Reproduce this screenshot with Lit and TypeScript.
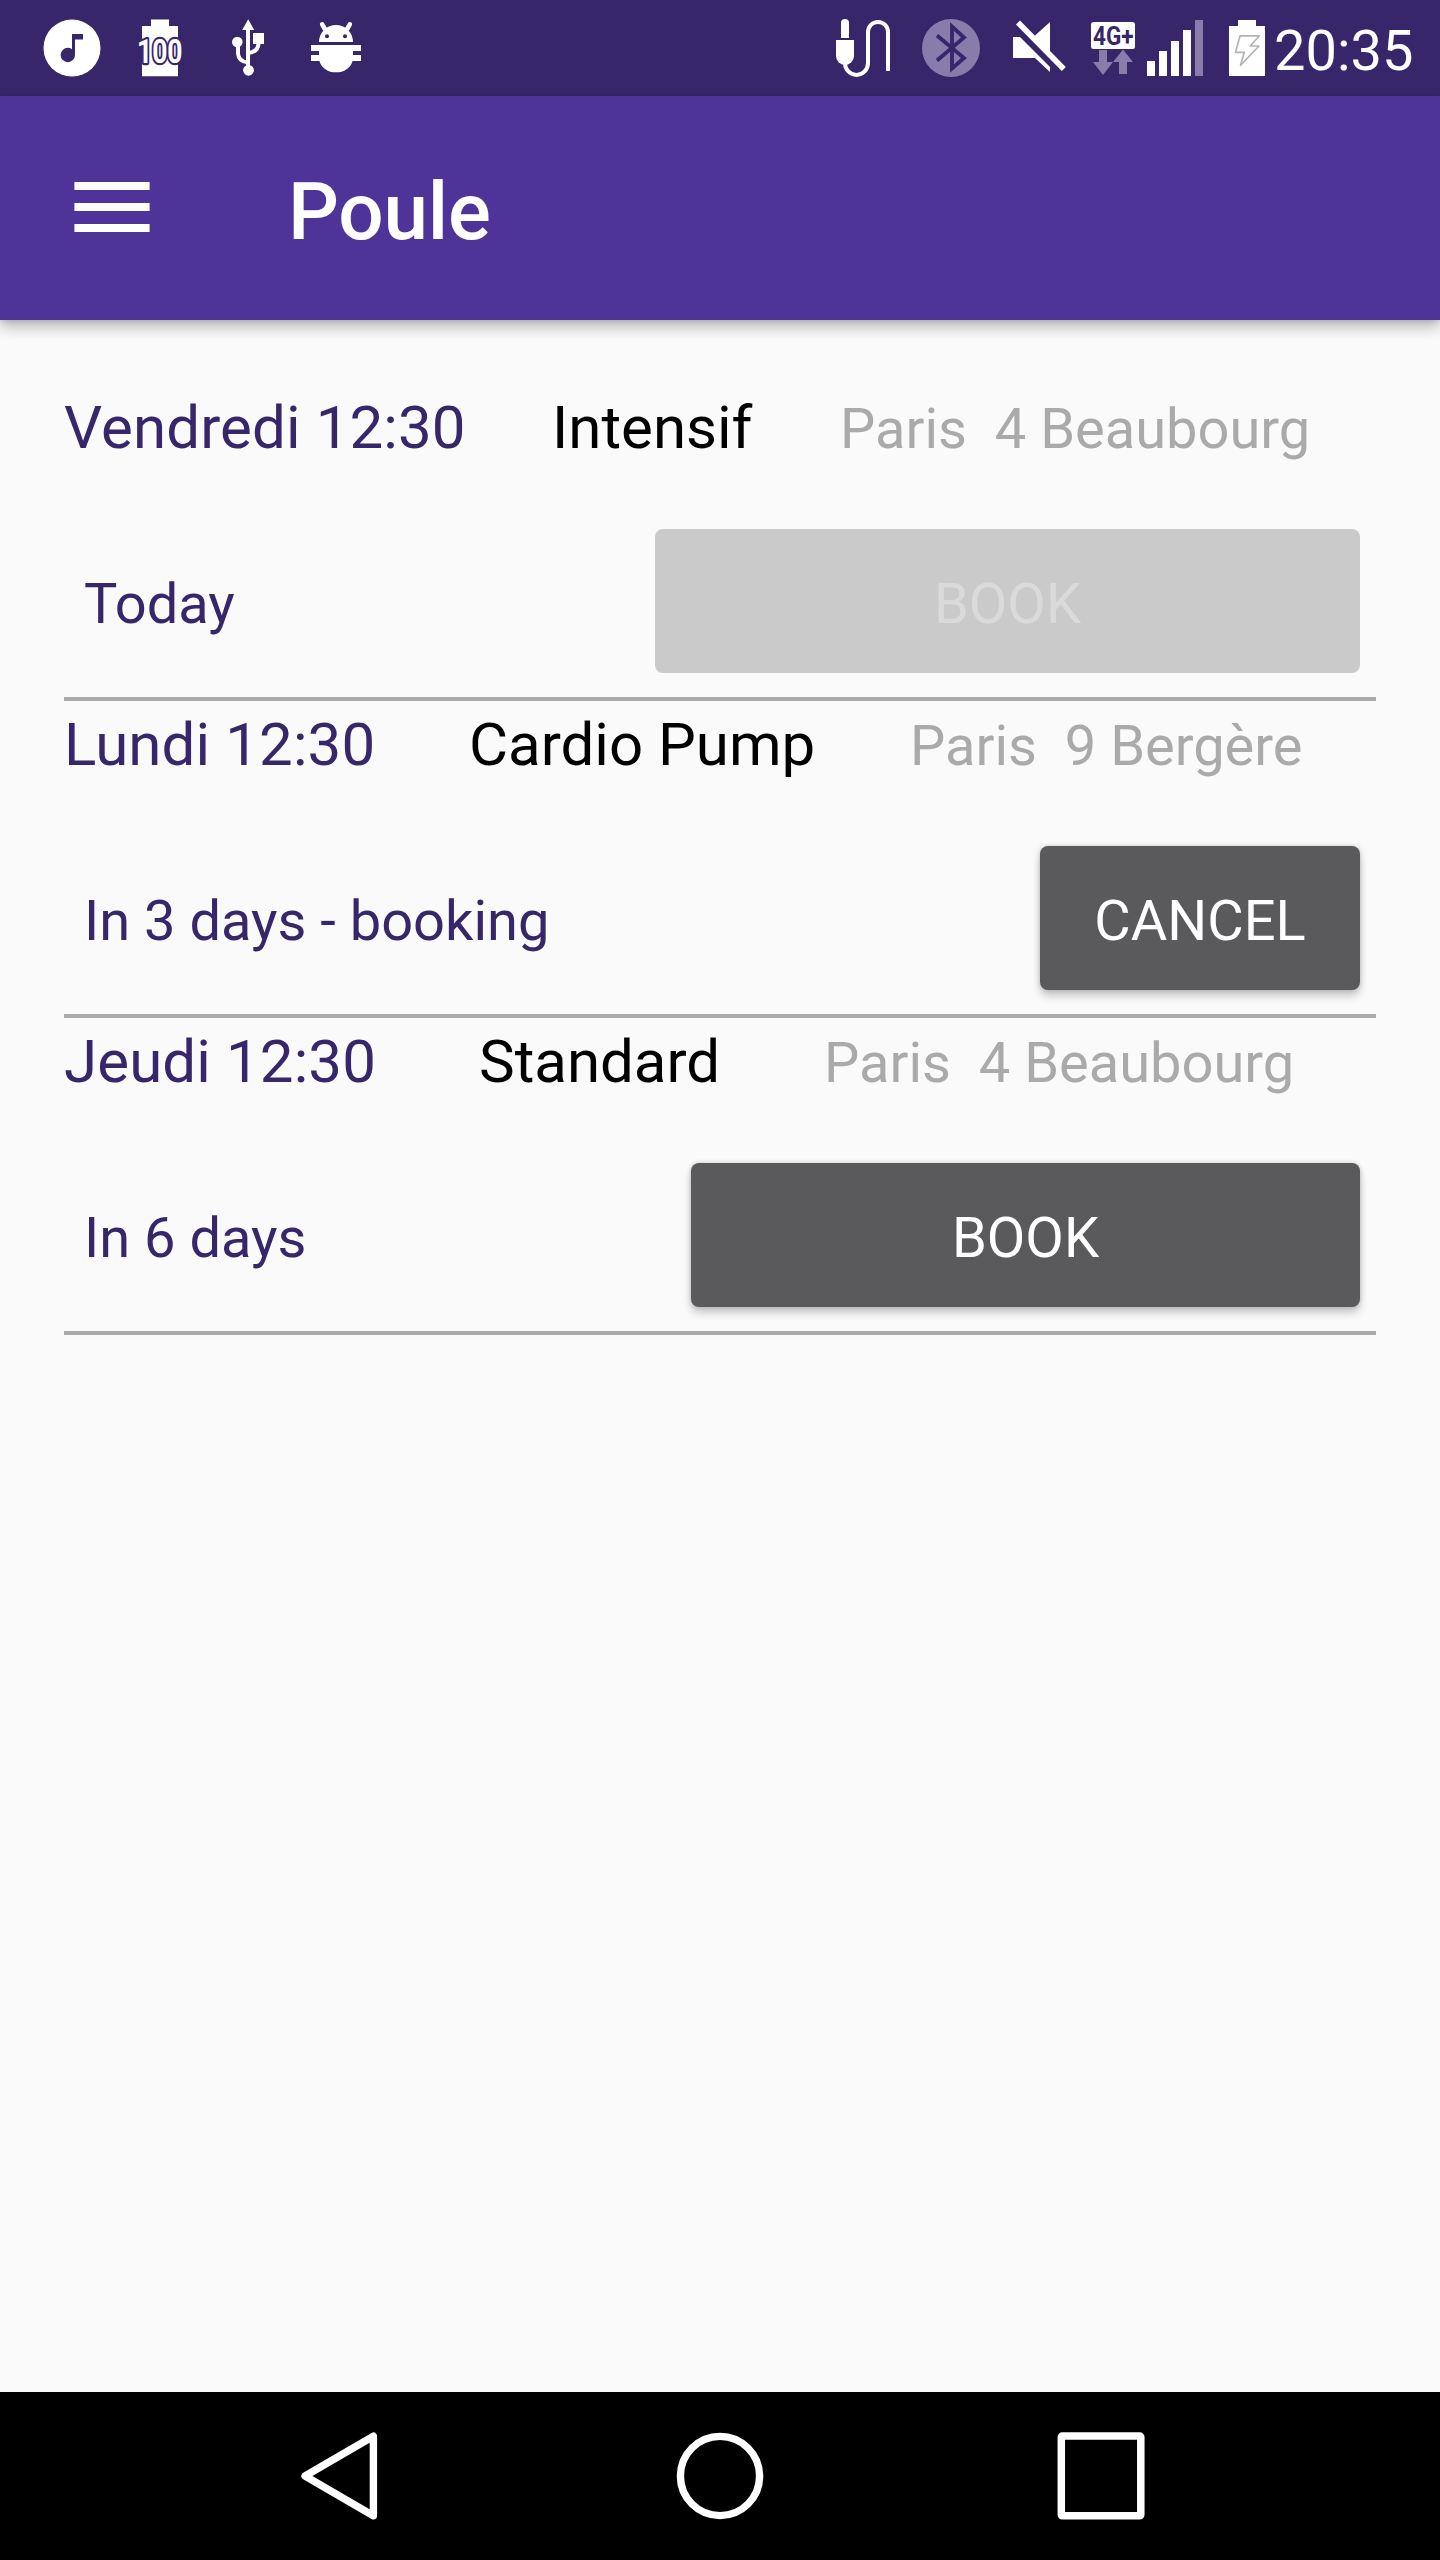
import { LitElement, html, svg, css, type SVGTemplateResult } from "lit";
import { customElement, property } from "lit/decorators.js";

const BAR = "#37266a";
const DIM = "#887caa";

interface StatusIcon {
  x: number;
  w: number;
  art: SVGTemplateResult;
}

interface Course {
  time: string;
  kind: string;
  place: string;
  kindStart: number;
  placeStart: number;
  when: string;
  action: string;
  actionWidth: number;
  disabled?: boolean;
}

const notifications: StatusIcon[] = [
  {
    x: 28, w: 88,
    art: svg`<circle cx="72" cy="48" r="28.5" fill="#fff"/>
      <circle cx="67.8" cy="55" r="7.2" fill=${BAR}/>
      <path d="M72 34h11v5.4h-8V55h-3z" fill=${BAR}/>`,
  },
  {
    x: 116, w: 88,
    art: svg`<path d="M151 19.5h18V26h9v50.3h-36V26h9z" fill="#fff"/>
      <g font-size="33" font-weight="700">
        <text x="137" y="63.2" textLength="45.5" lengthAdjust="spacingAndGlyphs" aria-hidden="true"
          fill=${BAR} stroke=${BAR} stroke-width="4.500" stroke-linejoin="round">100</text>
        <text x="137" y="63.2" textLength="45.5" lengthAdjust="spacingAndGlyphs" fill="#fff">100</text>
      </g>`,
  },
  {
    x: 204, w: 88,
    art: svg`<path d="M248.2 19.3l6 10.7h-12z" fill="#fff"/>
      <circle cx="248.5" cy="70.3" r="5.4" fill="#fff"/>
      <circle cx="237.3" cy="42" r="5.3" fill="#fff"/>
      <path d="M253 33h11v11h-11z" fill="#fff"/>
      <path d="M248 28v42M238 43v10.500q.5 8 10 9M258.500 43v1q-.8 8-10 9" fill="none" stroke="#fff" stroke-width="4"/>`,
  },
  {
    x: 292, w: 88,
    art: svg`<path d="M319 42a17 17 0 0 1 34 0z" fill="#fff"/>
      <path d="M322.200 24.300l4.300 7.500M349.800 24.300l-4.300 7.500" stroke="#fff" stroke-width="4.600" stroke-linecap="round"/>
      <circle cx="327" cy="36.3" r="2" fill=${BAR}/><circle cx="345" cy="36.3" r="2" fill=${BAR}/>
      <path d="M311 45h50v6h-8v4h8v6h-8.400a17 14.500 0 0 1-33.200 0H311v-6h8v-4h-8z" fill="#fff"/>`,
  },
];

const systemIcons: StatusIcon[] = [
  {
    x: 818, w: 88,
    art: svg`<path d="M841 38V23a4 4 0 0 1 8 0v15z" fill="#fff"/>
      <path d="M836 40h18v16a9 9 0 0 1-18 0z" fill="#fff"/>
      <path d="M845 63a11.500 12 0 0 0 23 0V32a10 10 0 0 1 20 0v39" fill="none" stroke="#fff" stroke-width="4"/>`,
  },
  {
    x: 906, w: 88,
    art: svg`<circle cx="951" cy="48" r="29" fill=${DIM}/>
      <path d="M937 35.500L964 58 952 68.500v-42L964 37.500 937 60.500" fill="none" stroke=${BAR} stroke-width="3.800"/>`,
  },
  {
    x: 994, w: 88,
    art: svg`<path d="M1013 37h7l30 30v5l-15-14h-22zM1050 22v30l-15.500-16z" fill="#fff"/>
      <path d="M1018 22.500L1063.800 69" stroke="#fff" stroke-width="5.600"/>`,
  },
  {
    x: 1082, w: 61,
    art: svg`<rect x="1091" y="22" width="44" height="27" rx="2.500" fill="#fff"/>
      <text x="1093" y="45" font-size="26" font-weight="700" textLength="40.500" lengthAdjust="spacingAndGlyphs" fill=${BAR}>4G+</text>
      <path d="M1099 50h8v12h6l-10 13-10-13h6zM1119 74V62h-6l10-12.500L1133 62h-6v12z" fill=${DIM}/>`,
  },
  {
    x: 1143, w: 72,
    art: svg`<path d="M1147 61h8v15h-8zM1159 51h8v25h-8zM1171 41h8v35h-8zM1183 30h8v46h-8z" fill="#fff"/>
      <path d="M1195 20h8v56h-8z" fill=${DIM}/>`,
  },
  {
    x: 1215, w: 58,
    art: svg`<path d="M1238 20h18v6h9v50h-36V26h9z" fill="#fff"/>
      <path d="M1240 35.800h19.500L1250.300 46h8.700l-18.500 19.300 3.800-13h-8.800z" fill="none" stroke="#b4b4b4" stroke-width="1.700" stroke-linejoin="round"/>`,
  },
];

const courses: Course[] = [
  { time: "Vendredi 12:30", kind: "Intensif", place: "Paris  4 Beaubourg", kindStart: 552, placeStart: 840, when: "Today", action: "BOOK", actionWidth: 705, disabled: true },
  { time: "Lundi 12:30", kind: "Cardio Pump", place: "Paris  9 Bergère", kindStart: 469, placeStart: 910, when: "In 3 days - booking", action: "CANCEL", actionWidth: 320 },
  { time: "Jeudi 12:30", kind: "Standard", place: "Paris  4 Beaubourg", kindStart: 479, placeStart: 824, when: "In 6 days", action: "BOOK", actionWidth: 669 },
];

@customElement("status-bar")
export class StatusBar extends LitElement {
  static styles = css`
    :host { display: flex; height: 96px; padding: 0 28px; box-sizing: border-box; background: #37266a; color: #fff; }
    .group { display: flex; }
    .system { margin-left: auto; }
    svg { display: block; height: 96px; font-family: Roboto, sans-serif; }
    .clock { width: 139px; box-sizing: border-box; padding: 18px 0 0 1px; font-size: 56px; line-height: 66px; white-space: nowrap; }
  `;

  private icon(i: StatusIcon) {
    return html`<svg width=${i.w} height="96" viewBox="${i.x} 0 ${i.w} 96">${i.art}</svg>`;
  }

  render() {
    return html`
      <div class="group">${notifications.map((i) => this.icon(i))}</div>
      <div class="group system">
        ${systemIcons.map((i) => this.icon(i))}
        <span class="clock">20:35</span>
      </div>`;
  }
}

@customElement("course-item")
export class CourseItem extends LitElement {
  static styles = css`
    :host { display: flex; flex-direction: column; height: 317px; box-sizing: border-box; border-bottom: 4px solid #aaa; }
    .head { display: grid; align-items: baseline; height: 121px; box-sizing: border-box; padding-top: 9px; white-space: pre; line-height: 70px; font-size: 60px; }
    .time, .when { color: #37266a; }
    .time { letter-spacing: 0.12px; }
    .kind { color: #000; }
    .place { color: #aaa; font-size: 56px; }
    .foot { display: flex; justify-content: space-between; padding: 24px 16px 24px 20px; font-size: 56px; line-height: 138px; }
    .when { padding-top: 6px; }
    .action { height: 144px; box-sizing: border-box; padding: 6px 0 0; border: 0; border-radius: 8px; background: #5a5a5c; color: #fff; font: inherit; text-align: center;
      box-shadow: 0 6px 9px rgba(0, 0, 0, 0.2), 0 0 5px rgba(0, 0, 0, 0.18); }
    .action:disabled { background: #cacaca; color: #dadada; box-shadow: none; }
  `;

  @property({ attribute: false }) course!: Course;

  render() {
    const c = this.course;
    const columns = `${c.kindStart - 64}px ${c.placeStart - c.kindStart}px 1fr`;
    return html`
      <div class="head" style="grid-template-columns:${columns}">
        <span class="time">${c.time}</span>
        <span class="kind">${c.kind}</span>
        <span class="place">${c.place}</span>
      </div>
      <div class="foot">
        <span class="when">${c.when}</span>
        <button class="action" style="width:${c.actionWidth}px" ?disabled=${c.disabled}>${c.action}</button>
      </div>`;
  }
}

@customElement("app-root")
export class AppRoot extends LitElement {
  static styles = css`
    :host { display: flex; flex-direction: column; height: 2560px; background: #fafafa; font-family: Roboto, sans-serif; overflow: hidden; }
    .appbar { display: flex; align-items: center; height: 224px; padding-left: 74px; background: #4e3498; color: #fff;
      box-shadow: 0 7px 14px rgba(0, 0, 0, 0.26), 0 2px 5px rgba(0, 0, 0, 0.1); }
    .menu { display: block; margin-top: -2px; }
    .title { margin: 7px 0 0 138px; font-size: 80px; font-weight: 500; line-height: 94px; letter-spacing: -0.2px; }
    .list { flex: 1; padding: 64px 64px 0; }
    .nav { display: flex; justify-content: center; align-items: center; gap: 293px; height: 168px; background: #000; }
    .nav svg { display: block; }
  `;

  render() {
    return html`
      <status-bar></status-bar>
      <header class="appbar">
        <svg class="menu" width="76" height="50" viewBox="0 0 76 50"><path d="M.4 0h75.200v8H.4zM.4 21h75.200v8H.4zM.4 42h75.200v8H.4z" fill="#fff"/></svg>
        <h1 class="title">Poule</h1>
      </header>
      <main class="list">${courses.map((c) => html`<course-item .course=${c}></course-item>`)}</main>
      <nav class="nav">
        <svg width="88" height="88" viewBox="0 0 88 88"><path d="M78.400 4.200v79.600L10 44z" fill="none" stroke="#fff" stroke-width="7.400" stroke-linejoin="round"/></svg>
        <svg width="88" height="88" viewBox="0 0 88 88"><circle cx="44" cy="44" r="39.600" fill="none" stroke="#fff" stroke-width="7.400"/></svg>
        <svg width="88" height="88" viewBox="0 0 88 88"><rect x="4.300" y="4.100" width="79.500" height="79.700" rx="1" fill="none" stroke="#fff" stroke-width="7.500" stroke-linejoin="round"/></svg>
      </nav>`;
  }
}
